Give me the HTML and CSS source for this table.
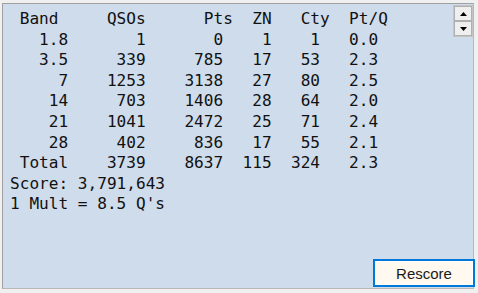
FILE: index.html
```html
<!DOCTYPE html>
<html>
<head>
<meta charset="utf-8">
<link rel="stylesheet" href="styles.css">
</head>
<body>
<div class="window">
  <div class="panel">
<pre class="summary"> Band     QSOs      Pts  ZN   Cty  Pt/Q
   1.8       1       0    1    1   0.0
   3.5     339     785   17   53   2.3
     7    1253    3138   27   80   2.5
    14     703    1406   28   64   2.0
    21    1041    2472   25   71   2.4
    28     402     836   17   55   2.1
 Total    3739    8637  115  324   2.3
Score: 3,791,643
1 Mult = 8.5 Q's</pre>
  </div>
  <div class="spin">
    <button class="spin-btn" aria-label="Scroll up"><svg width="7" height="4" viewBox="0 0 7 4"><path d="M3.5 0 L7 4 L0 4 Z" fill="#000"/></svg></button>
    <button class="spin-btn" aria-label="Scroll down"><svg width="7" height="4" viewBox="0 0 7 4"><path d="M0 0 L7 0 L3.5 4 Z" fill="#000"/></svg></button>
  </div>
  <button class="rescore">Rescore</button>
</div>
</body>
</html>
```
FILE: styles.css
```css
html, body {
  margin: 0;
  padding: 0;
  background: #f0f0f0;
}
.window {
  position: relative;
  width: 478px;
  height: 293px;
  padding: 3px 4px 4px 2px;
  box-sizing: border-box;
  display: flex;
}
.panel {
  flex: 1;
  background: #cfdcec;
  border: 1px solid #a0a0a0;
  border-right-color: #b8b8b8;
  border-bottom-color: #b8b8b8;
  padding: 5px 0 0 7px;
  box-sizing: border-box;
}
.summary {
  margin: 0;
  font-family: "DejaVu Sans Mono", "Liberation Mono", monospace;
  font-size: 16.1px;
  line-height: 20.6px;
  color: #111;
}
.spin {
  position: absolute;
  top: 5px;
  left: 453px;
  width: 18px;
  display: flex;
  flex-direction: column;
  border: 1px solid #c4c4c4;
  background: #f0f0f0;
}
.spin-btn {
  margin: 0;
  padding: 0;
  height: 15px;
  border: 1px solid #b0b0b0;
  background: #efefef;
  display: flex;
  align-items: center;
  justify-content: center;
}
.rescore {
  position: absolute;
  left: 373px;
  top: 259px;
  width: 102px;
  height: 28px;
  margin: 0;
  padding: 0;
  border: 2px solid #0078d7;
  box-shadow: inset 0 0 0 1px #fff;
  background: #fff9ef;
  font-family: "Liberation Sans", Arial, sans-serif;
  font-size: 15px;
  color: #1a1a1a;
}
```
